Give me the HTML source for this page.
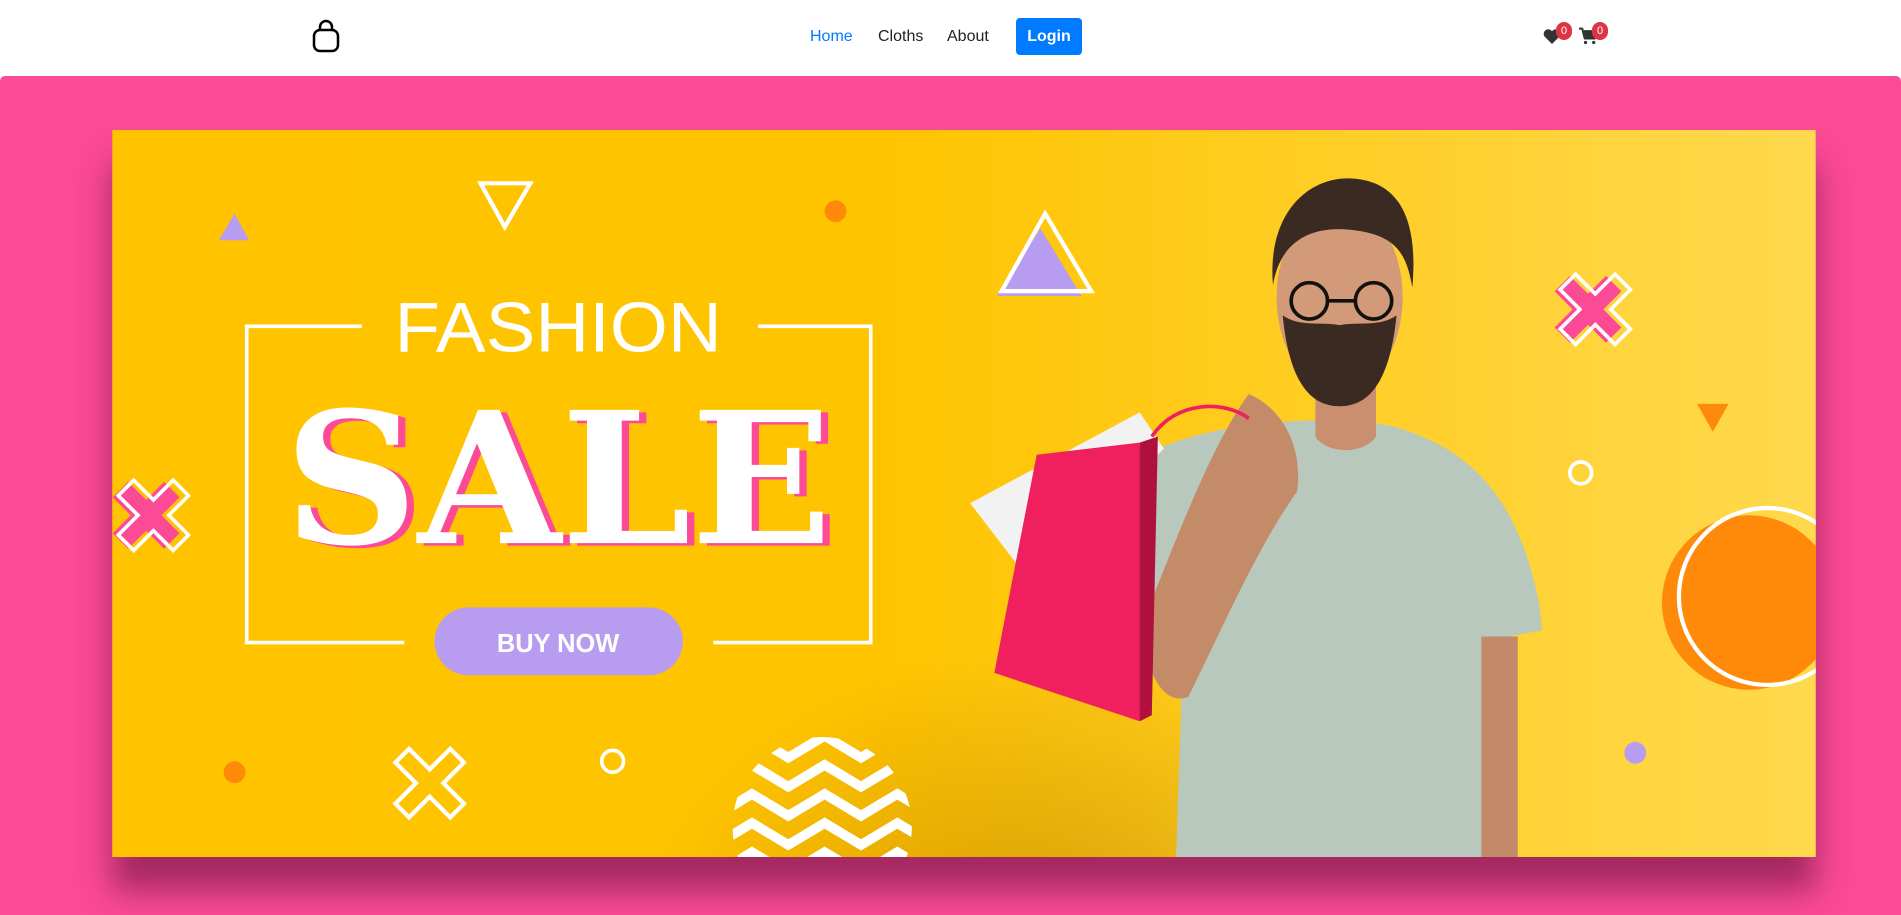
<!DOCTYPE html>
<html><head><meta charset="utf-8"><style>
*{margin:0;padding:0;box-sizing:border-box}
html,body{width:1901px;height:915px;overflow:hidden}
body{background:#fff;font-family:"Liberation Sans",sans-serif;position:relative}
.nav{position:absolute;left:0;top:0;width:1901px;height:76px;background:#fff}
.nav a{position:absolute;top:28px;font-size:16px;color:#222;text-decoration:none}
.login{position:absolute;left:1016px;top:18px;width:66px;height:37px;background:#007bff;border-radius:4px;color:#fff;font-size:16px;font-weight:bold;text-align:center;line-height:37px}
.badge{position:absolute;width:16px;height:18px;border-radius:8px;background:#dc3545;color:#fff;font-size:11px;text-align:center;line-height:18px}
.pink{position:absolute;left:0;top:76px;width:1901px;height:839px;background:#fc4a96;border-radius:5px 5px 0 0;overflow:hidden}
.banner{position:absolute;left:112px;top:54px;width:1704px;height:727px;box-shadow:0 34px 30px rgba(60,0,30,.45)}
</style></head><body>
<div class="nav">
<svg style="position:absolute;left:311px;top:19px" width="30" height="34" viewBox="0 0 30 34"><path d="M9 12V8a6 6 0 0 1 12 0v4" fill="none" stroke="#000" stroke-width="2.5"/><rect x="3" y="11" width="24" height="21" rx="6" fill="none" stroke="#000" stroke-width="2.5"/></svg>
<a style="left:810px;color:#007bff">Home</a>
<a style="left:878px">Cloths</a>
<a style="left:947px">About</a>
<div class="login">Login</div>
<svg style="position:absolute;left:1543px;top:28px" width="18" height="17" viewBox="0 0 24 22"><path d="M12 21 2 11a5.5 5.5 0 0 1 10-7 5.5 5.5 0 0 1 10 7z" fill="#333"/></svg>
<div class="badge" style="left:1556px;top:22px">0</div>
<svg style="position:absolute;left:1578px;top:27px" width="20" height="18" viewBox="0 0 24 22"><path d="M1 2h4l3 12h12l3-9H7" fill="none" stroke="#333" stroke-width="2.5"/><circle cx="9" cy="19" r="2" fill="#333"/><circle cx="19" cy="19" r="2" fill="#333"/><path d="M7 6h15l-2 7H9z" fill="#333"/></svg>
<div class="badge" style="left:1592px;top:22px">0</div>
</div>
<div class="pink">
<svg class="banner" viewBox="92 107 1406 600" width="1704" height="727">
<defs>
<linearGradient id="bg" x1="0" x2="1"><stop offset="0" stop-color="#ffc300"/><stop offset=".45" stop-color="#ffc400"/><stop offset="1" stop-color="#ffd94e"/></linearGradient>
<radialGradient id="sh" cx="0.5" cy="0.8" r="0.5"><stop offset="0" stop-color="#b37800" stop-opacity=".55"/><stop offset="1" stop-color="#b37800" stop-opacity="0"/></radialGradient>
<clipPath id="cb"><rect x="92" y="107" width="1406" height="600"/></clipPath>
<clipPath id="cc"><circle cx="678" cy="682" r="74"/></clipPath>
</defs>
<g clip-path="url(#cb)">
<rect x="92" y="107" width="1406" height="600" fill="url(#bg)"/>
<ellipse cx="850" cy="640" rx="330" ry="260" fill="url(#sh)"/>
<polygon points="180,198 193,176 205,198" fill="#b89cf0"/>
<polygon points="396,151 437,151 416,187" fill="none" stroke="#fff" stroke-width="3.5"/>
<circle cx="689" cy="174" r="9" fill="#ff8a0a"/>
<polygon points="822,244 858,188 892,244" fill="#b89cf0"/>
<polygon points="826,240 862,176 900,240" fill="none" stroke="#fff" stroke-width="3.5"/>
<circle cx="193" cy="637" r="9" fill="#ff8a0a"/>
<circle cx="505" cy="628" r="9" fill="none" stroke="#fff" stroke-width="3"/>
<circle cx="1349" cy="621" r="9" fill="#b89cf0"/>
<circle cx="1304" cy="390" r="9" fill="none" stroke="#fff" stroke-width="3"/>
<polygon points="1400,333 1426,333 1413,356" fill="#ff8a0a"/>
<circle cx="1443" cy="497" r="72" fill="#ff8a0a"/>
<circle cx="1458" cy="492" r="73" fill="none" stroke="#fff" stroke-width="3.5"/>
<g transform="translate(120,425) rotate(45)"><rect x="-30" y="-9" width="60" height="18" fill="#fc4a96"/><rect x="-9" y="-30" width="18" height="60" fill="#fc4a96"/></g>
<g transform="translate(126,425) rotate(45)"><path d="M-9,-32h18v23h23v18h-23v23h-18v-23h-23v-18h23z" fill="none" stroke="#fff" stroke-width="3"/></g>
<g transform="translate(1310,255) rotate(45)"><rect x="-30" y="-9" width="60" height="18" fill="#fc4a96"/><rect x="-9" y="-30" width="18" height="60" fill="#fc4a96"/></g>
<g transform="translate(1316,255) rotate(45)"><path d="M-9,-32h18v23h23v18h-23v23h-18v-23h-23v-18h23z" fill="none" stroke="#fff" stroke-width="3"/></g>
<g transform="translate(354,646) rotate(45)"><path d="M-8,-32h16v24h24v16h-24v24h-16v-24h-24v-16h24z" fill="none" stroke="#fff" stroke-width="3.5"/></g>
<g clip-path="url(#cc)" fill="none" stroke="#fff" stroke-width="8">
<path d="M590,625 l30,-18 30,18 30,-18 30,18 30,-18 30,18"/>
<path d="M590,649 l30,-18 30,18 30,-18 30,18 30,-18 30,18"/>
<path d="M590,673 l30,-18 30,18 30,-18 30,18 30,-18 30,18"/>
<path d="M590,697 l30,-18 30,18 30,-18 30,18 30,-18 30,18"/>
<path d="M590,721 l30,-18 30,18 30,-18 30,18 30,-18 30,18"/>
</g>
<path d="M298,269H203V530H333M588,530H718V269H625" fill="none" stroke="#fff" stroke-width="3"/>
<text x="460" y="290" text-anchor="middle" font-family="Liberation Sans" font-size="58" fill="#fff" textLength="270" lengthAdjust="spacingAndGlyphs">FASHION</text>
<g transform="translate(0,450) scale(1,1.04) translate(0,-450)">
<text x="240" y="450" font-family="DejaVu Serif" font-weight="bold" font-size="145" fill="#fc4a96" textLength="452" lengthAdjust="spacingAndGlyphs">SALE</text>
<text x="234" y="448" font-family="DejaVu Serif" font-weight="bold" font-size="145" fill="#fff" textLength="452" lengthAdjust="spacingAndGlyphs">SALE</text>
</g>
<rect x="358" y="501" width="205" height="56" rx="28" fill="#b89cf0"/>
<text x="460" y="538" text-anchor="middle" font-family="Liberation Sans" font-weight="bold" font-size="21" fill="#fff">BUY NOW</text>
<path d="M955,370 C1010,345 1120,340 1160,355 C1220,375 1255,420 1270,500 L1272,520 L1245,525 L1250,707 L970,707 L975,560 L940,540 C935,460 930,400 955,370z" fill="#b8c8bd"/>
<path d="M1085,300 h50 v60 c-10,15 -40,15 -50,0z" fill="#c98f6e"/>
<ellipse cx="1105" cy="245" rx="52" ry="78" fill="#d29a78"/>
<path d="M1058,260 c5,50 20,75 47,75 c27,0 42,-25 47,-75 c-15,10 -30,5 -47,8 c-17,-3 -32,2 -47,-8z" fill="#3a2a22"/>
<path d="M1050,235 c-5,-60 30,-90 65,-88 c40,2 55,35 50,90 c-5,-30 -15,-45 -55,-48 c-35,-2 -55,15 -60,46z" fill="#3a2a22"/>
<circle cx="1080" cy="248" r="15" fill="none" stroke="#111" stroke-width="3"/>
<circle cx="1133" cy="248" r="15" fill="none" stroke="#111" stroke-width="3"/>
<path d="M1095,248h23" stroke="#111" stroke-width="3"/>
<rect x="1222" y="525" width="30" height="182" fill="#c28a68"/>
<path d="M940,520 c10,50 25,60 40,55 c30,-60 55,-120 90,-170 c5,-40 -15,-70 -40,-80 c-30,40 -60,120 -90,195z" fill="#c48b69"/>
<path d="M800,415 l140,-75 l20,30 l-110,110z" fill="#f2f2f2"/>
<path d="M855,375 l85,-10 l10,210 l-10,20 l-120,-40z" fill="#f0205e"/>
<path d="M940,365 l15,-5 l-5,230 l-10,5z" fill="#b0103e"/>
<path d="M950,360 c20,-30 60,-30 80,-15" fill="none" stroke="#f0205e" stroke-width="3"/>
</g>
</svg>
</div>
</body></html>
